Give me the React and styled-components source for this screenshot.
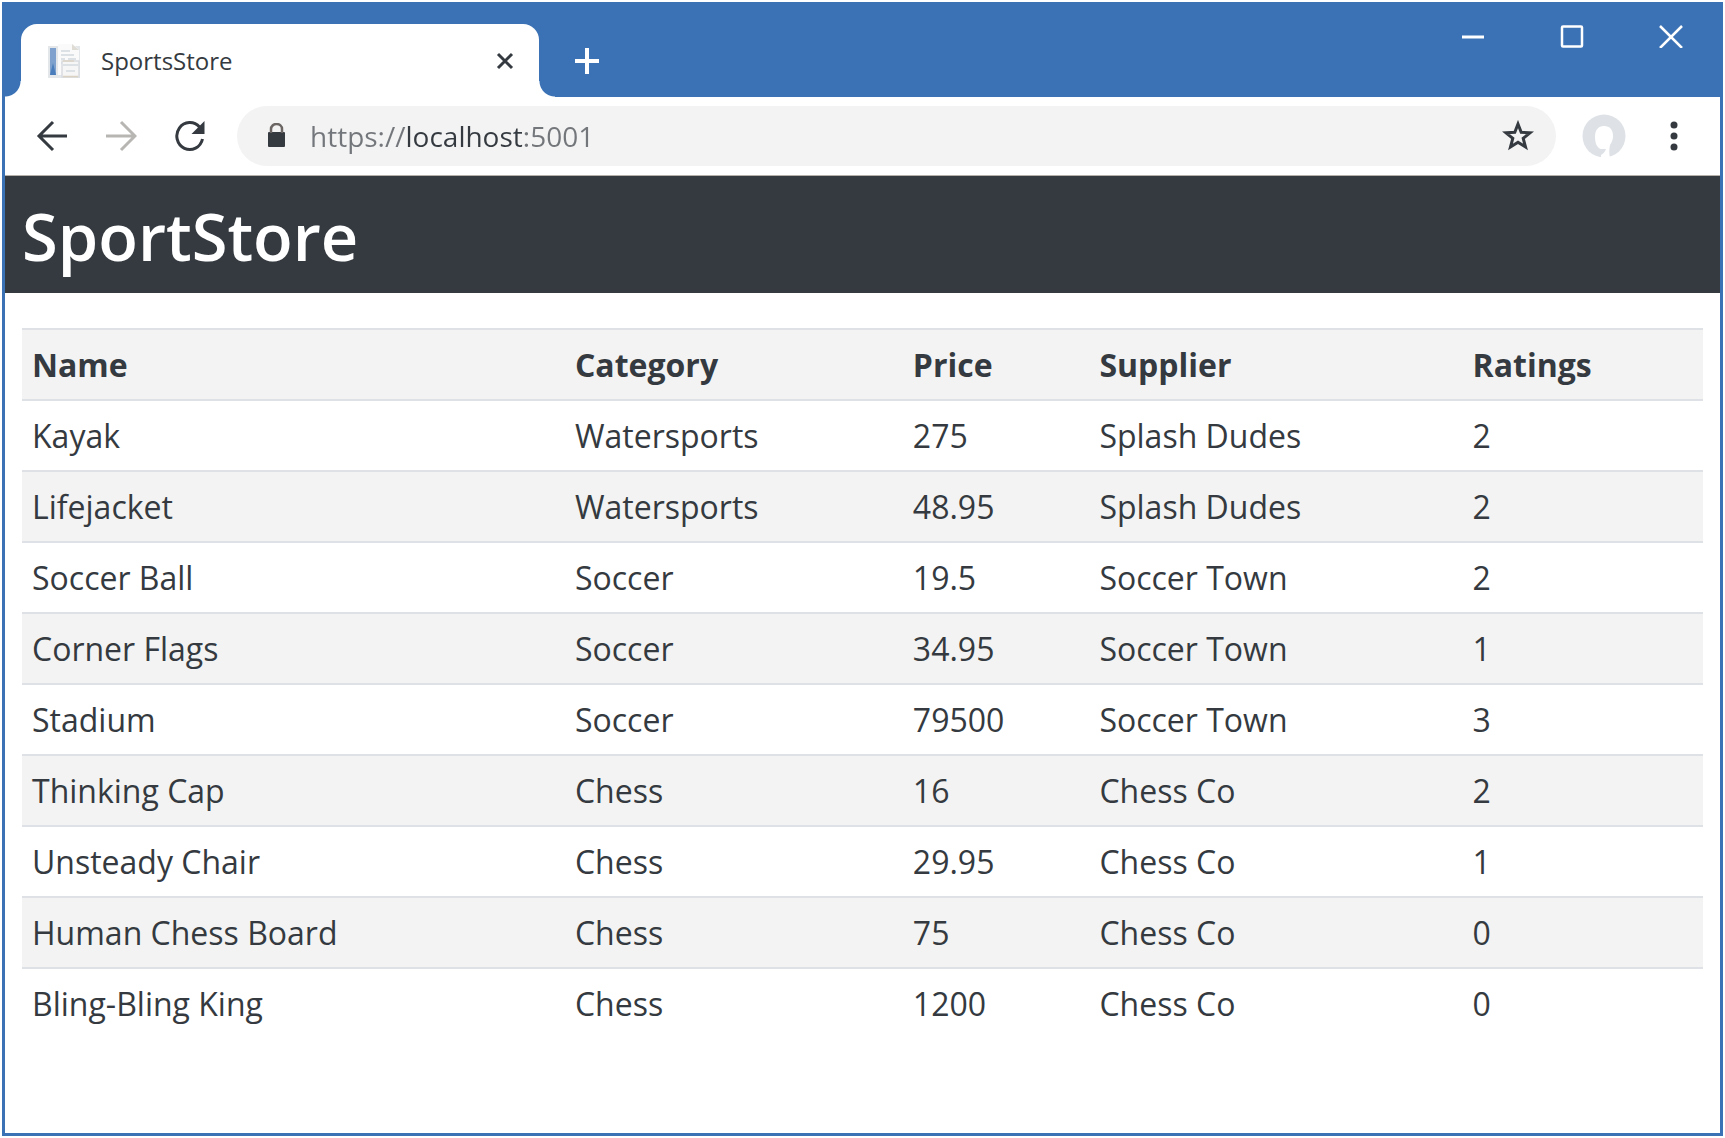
import React from "react";
import styled, { createGlobalStyle } from "styled-components";

const BLUE = "#3a72b5";
const INK = "#343a40";

const GlobalStyle = createGlobalStyle`
  *, *::before, *::after { box-sizing: border-box; }
  body {
    margin: 0;
    background: #fff;
    color: ${INK};
    font-family: "Open Sans", "Noto Sans", sans-serif;
  }
`;

const Page = styled.div`
  display: flex;
  min-height: 100vh;
  padding: 2px;
`;

const BrowserWindow = styled.div`
  flex: 1;
  display: flex;
  flex-direction: column;
  border: 3px solid ${BLUE};
  border-top-width: 0;
  background: #fff;
`;

const TitleBar = styled.div`
  display: flex;
  height: 95px;
  padding-left: 16px;
  background: ${BLUE};
`;

const Tab = styled.div`
  position: relative;
  display: flex;
  align-items: center;
  gap: 20px;
  width: 518px;
  margin-top: 22px;
  padding: 0 18px 0 26px;
  border-radius: 16px 16px 0 0;
  background: #fff;

  &::before,
  &::after {
    content: "";
    position: absolute;
    bottom: 0;
    width: 16px;
    height: 16px;
  }
  &::before {
    right: 100%;
    background: radial-gradient(circle at 0 0, transparent 15px, #fff 16px);
  }
  &::after {
    left: 100%;
    background: radial-gradient(circle at 100% 0, transparent 15px, #fff 16px);
  }
`;

const TabTitle = styled.span`
  flex: 1;
  font-size: 24px;
  line-height: 32px;
`;

const IconButton = styled.button`
  display: flex;
  align-items: center;
  justify-content: center;
  width: ${(p) => p.$width || 32}px;
  height: ${(p) => p.$height || 48}px;
  padding: 0;
  border: 0;
  background: none;
  color: ${(p) => p.$color || INK};
`;

const NewTab = styled.div`
  display: flex;
  align-items: center;
  margin: 22px 0 0 32px;
`;

const WindowControls = styled.div`
  display: flex;
  height: 68px;
  margin-left: auto;
`;

const Toolbar = styled.div`
  display: flex;
  align-items: center;
  height: 79px;
  padding: 0 20px 0 13px;
  border-bottom: 1px solid #b5b0aa;
`;

const Nav = styled.nav`
  display: flex;
  gap: 1px;
  margin-right: 13px;
`;

const AddressBar = styled.div`
  flex: 1;
  display: flex;
  align-items: center;
  height: 60px;
  padding: 0 22px 0 30px;
  border-radius: 30px;
  background: #f3f3f3;
`;

const AddressInput = styled.input`
  flex: 1;
  min-width: 0;
  height: 44px;
  margin-left: 23px;
  padding: 0;
  border: 0;
  outline: 0;
  color: #73767a;
  font: 28px/40px "Open Sans", "Noto Sans", sans-serif;
  background: linear-gradient(90deg, #73767a 95px, ${INK} 95px 215px, #73767a 215px);
  -webkit-background-clip: text;
  background-clip: text;
  -webkit-text-fill-color: transparent;
`;

const Actions = styled.div`
  display: flex;
  align-items: center;
  gap: 22px;
  margin-left: 26px;
`;

const StoreHeader = styled.header`
  padding: 18px 17px 15px;
  background: ${INK};
`;

const StoreTitle = styled.h1`
  margin: 0;
  color: #fff;
  font-size: 65px;
  font-weight: 600;
  line-height: 84px;
`;

const Content = styled.main`
  padding: 35px 17px;
`;

const ProductTable = styled.table`
  width: 100%;
  table-layout: fixed;
  border-spacing: 0;
  text-align: left;
  font-size: 32px;
  line-height: 45px;
`;

const Column = styled.col`
  width: ${(p) => p.$share}%;
`;

const Row = styled.tr`
  background: ${(p) => (p.$striped ? "#f3f3f3" : "#fff")};
`;

const HeadCell = styled.th`
  padding: 12px 10px;
  border-top: 2px solid #dee2e6;
  font-weight: 700;
`;

const Cell = styled.td`
  padding: 12px 10px;
  border-top: 2px solid #dee2e6;
`;

const columns = [
  { label: "Name", share: 32.3 },
  { label: "Category", share: 20.1 },
  { label: "Price", share: 11.1 },
  { label: "Supplier", share: 22.2 },
  { label: "Ratings", share: 14.3 },
];

const products = [
  ["Kayak", "Watersports", "275", "Splash Dudes", "2"],
  ["Lifejacket", "Watersports", "48.95", "Splash Dudes", "2"],
  ["Soccer Ball", "Soccer", "19.5", "Soccer Town", "2"],
  ["Corner Flags", "Soccer", "34.95", "Soccer Town", "1"],
  ["Stadium", "Soccer", "79500", "Soccer Town", "3"],
  ["Thinking Cap", "Chess", "16", "Chess Co", "2"],
  ["Unsteady Chair", "Chess", "29.95", "Chess Co", "1"],
  ["Human Chess Board", "Chess", "75", "Chess Co", "0"],
  ["Bling-Bling King", "Chess", "1200", "Chess Co", "0"],
];

const Stroke = ({ w, h, sw = 3, children, ...rest }) => (
  <svg width={w} height={h} viewBox={`0 0 ${w} ${h}`} fill="none" stroke="currentColor" strokeWidth={sw} aria-hidden="true" {...rest}>
    {children}
  </svg>
);

const Favicon = () => (
  <svg width="34" height="36" viewBox="0 0 34 36" aria-hidden="true">
    <rect x="1" y="3" width="32" height="32" fill="#e3e7ea" />
    <rect x="3" y="5" width="6" height="27" fill="#7ea2cd" />
    <path d="M6 20l3 12H3z" fill="#4a7dbb" />
    <path d="M11 1h15l6 6v25H11z" fill="#fafafa" />
    <path d="M25 1v6h7z" fill="#dfdcd6" />
    <path d="M14 8h9M14 12h13M14 16h4M21 16h8M14 20h3" stroke="#dce1e5" strokeWidth="2" />
    <rect x="15" y="18" width="17" height="16" fill="#f6f6f6" stroke="#d9dcdf" strokeWidth="1.500" />
    <path d="M16 22h15M19 28h9" stroke="#dce1e5" strokeWidth="2" />
    <path d="M16 18h11M16 33.500h15" stroke="#dcd2c4" strokeWidth="1.500" />
  </svg>
);

export default function App() {
  return (
    <>
      <GlobalStyle />
      <Page>
        <BrowserWindow>
          <TitleBar>
            <Tab>
              <Favicon />
              <TabTitle>SportsStore</TabTitle>
              <IconButton aria-label="Close tab">
                <Stroke w={18} h={18}><path d="M2 2l14 14M16 2L2 16" /></Stroke>
              </IconButton>
            </Tab>
            <NewTab>
              <IconButton aria-label="New tab" $color="#fff">
                <Stroke w={26} h={26} sw={4}><path d="M13 0v26M1 13h24" /></Stroke>
              </IconButton>
            </NewTab>
            <WindowControls>
              <IconButton aria-label="Minimize" $color="#fff" $width={99} $height={68}>
                <Stroke w={24} h={24}><path d="M1 13h22" /></Stroke>
              </IconButton>
              <IconButton aria-label="Maximize" $color="#fff" $width={99} $height={68}>
                <Stroke w={24} h={24} sw={2.5}><rect x="2" y="2.500" width="20" height="20" rx="1" /></Stroke>
              </IconButton>
              <IconButton aria-label="Close" $color="#fff" $width={99} $height={68}>
                <Stroke w={24} h={24} sw={2.5}><path d="M1 2l22 22M23 2L1 24" /></Stroke>
              </IconButton>
            </WindowControls>
          </TitleBar>
          <Toolbar>
            <Nav aria-label="Browser navigation">
              <IconButton aria-label="Back" $width={68}>
                <Stroke w={32} h={32}><path d="M31 16H4M17 2L3 16l14 14" /></Stroke>
              </IconButton>
              <IconButton aria-label="Forward" $width={68} $color="#b8b6b3">
                <Stroke w={32} h={32}><path d="M1 16h28M16 2l14 14-14 14" /></Stroke>
              </IconButton>
              <IconButton aria-label="Reload" $width={68}>
                <Stroke w={32} h={32}>
                  <path d="M28.500 19A13 13.500 0 1 1 25.500 7" />
                  <path d="M30.500 1v13h-13z" fill="currentColor" stroke="none" />
                </Stroke>
              </IconButton>
            </Nav>
            <AddressBar>
              <svg width="20" height="26" viewBox="0 0 20 26" aria-hidden="true">
                <rect x="1" y="9" width="17" height="15" rx="1" fill={INK} />
                <path d="M4 10V6a5.500 5 0 0 1 11 0v4" fill="none" stroke="#6b6663" strokeWidth="2.500" />
              </svg>
              <AddressInput aria-label="Address" defaultValue="https://localhost:5001" spellCheck={false} />
              <IconButton aria-label="Bookmark this page">
                <Stroke w={32} h={32}>
                  <path d="M16 4l3.200 8.300 8.900.5-6.900 5.600 2.300 8.600-7.500-4.800-7.500 4.800 2.300-8.600-6.900-5.600 8.900-.5z" />
                </Stroke>
              </IconButton>
            </AddressBar>
            <Actions>
              <IconButton aria-label="Profile" $width={44}>
                <svg width="44" height="44" viewBox="0 0 44 44" aria-hidden="true">
                  <circle cx="22" cy="22" r="21.500" fill="#dee2e6" />
                  <path d="M22 12c-6 0-9 4-9 11 0 6 2 11 6 12h5c-1 3-3 5-5 6v3h9c-1-4-1-9 0-13 2-3 3-6 3-9 0-6-3-10-9-10z" fill="#fff" />
                </svg>
              </IconButton>
              <IconButton aria-label="Menu" $width={52}>
                <svg width="8" height="30" viewBox="0 0 8 30" fill="currentColor" aria-hidden="true">
                  <circle cx="4" cy="4" r="3.500" />
                  <circle cx="4" cy="15" r="3.500" />
                  <circle cx="4" cy="26" r="3.500" />
                </svg>
              </IconButton>
            </Actions>
          </Toolbar>
          <StoreHeader>
            <StoreTitle>SportStore</StoreTitle>
          </StoreHeader>
          <Content>
            <ProductTable>
              <colgroup>
                {columns.map((c) => <Column key={c.label} $share={c.share} />)}
              </colgroup>
              <thead>
                <Row $striped>
                  {columns.map((c) => <HeadCell key={c.label} scope="col">{c.label}</HeadCell>)}
                </Row>
              </thead>
              <tbody>
                {products.map((product, i) => (
                  <Row key={product[0]} $striped={i % 2 === 1}>
                    {product.map((value, j) => <Cell key={columns[j].label}>{value}</Cell>)}
                  </Row>
                ))}
              </tbody>
            </ProductTable>
          </Content>
        </BrowserWindow>
      </Page>
    </>
  );
}
